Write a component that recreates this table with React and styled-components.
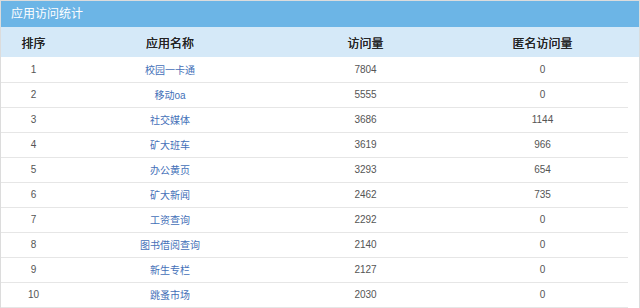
import styled, { createGlobalStyle } from "styled-components";

const GlobalStyle = createGlobalStyle`
  body {
    margin: 0;
    background: #fff;
    font-family: "Liberation Sans", "Noto Sans CJK SC", sans-serif;
  }
`;

const Panel = styled.div`
  width: 640px;
  height: 308px;
  box-sizing: border-box;
  border: 1px solid #dcdcdc;
  border-bottom: none;
  overflow: hidden;
  display: flex;
  flex-direction: column;
`;

const TitleBar = styled.div`
  height: 26px;
  flex: none;
  background: #6cb5e6;
  color: #fff;
  font-size: 12px;
  line-height: 26px;
  padding-left: 10px;
`;

const Table = styled.table`
  width: 100%;
  border-collapse: collapse;
  table-layout: fixed;
`;

const HeadRow = styled.tr`
  background: #d5e9f8;
  height: 30px;
`;

const Th = styled.th`
  font-size: 12px;
  font-weight: normal;
  color: #222;
  text-align: center;
  padding: 0;
  text-shadow: 0 0 0.2px #222;
`;

const Row = styled.tr`
  height: 25px;
`;

const Td = styled.td`
  font-size: 10px;
  color: ${(props) => (props.link ? "#4470b8" : "#555")};
  text-align: center;
  padding: 0;
  border-bottom: 1px solid #e6e6e6;
`;

const Gap = styled.td`
  padding: 0;
  border-bottom: none;
`;

const cols = [65, 208, 183, 171, 11];

const data = [
  ["1", "校园一卡通", "7804", "0"],
  ["2", "移动oa", "5555", "0"],
  ["3", "社交媒体", "3686", "1144"],
  ["4", "矿大班车", "3619", "966"],
  ["5", "办公黄页", "3293", "654"],
  ["6", "矿大新闻", "2462", "735"],
  ["7", "工资查询", "2292", "0"],
  ["8", "图书借阅查询", "2140", "0"],
  ["9", "新生专栏", "2127", "0"],
  ["10", "跳蚤市场", "2030", "0"],
];

export default function App() {
  return (
    <>
      <GlobalStyle />
      <Panel>
        <TitleBar>应用访问统计</TitleBar>
        <Table>
          <colgroup>
            {cols.map((w, i) => (
              <col key={i} style={{ width: w }} />
            ))}
          </colgroup>
          <thead>
            <HeadRow>
              <Th>排序</Th>
              <Th>应用名称</Th>
              <Th>访问量</Th>
              <Th>匿名访问量</Th>
              <Th />
            </HeadRow>
          </thead>
          <tbody>
            {data.map((r) => (
              <Row key={r[0]}>
                <Td>{r[0]}</Td>
                <Td link>{r[1]}</Td>
                <Td>{r[2]}</Td>
                <Td>{r[3]}</Td>
                <Gap />
              </Row>
            ))}
          </tbody>
        </Table>
      </Panel>
    </>
  );
}
